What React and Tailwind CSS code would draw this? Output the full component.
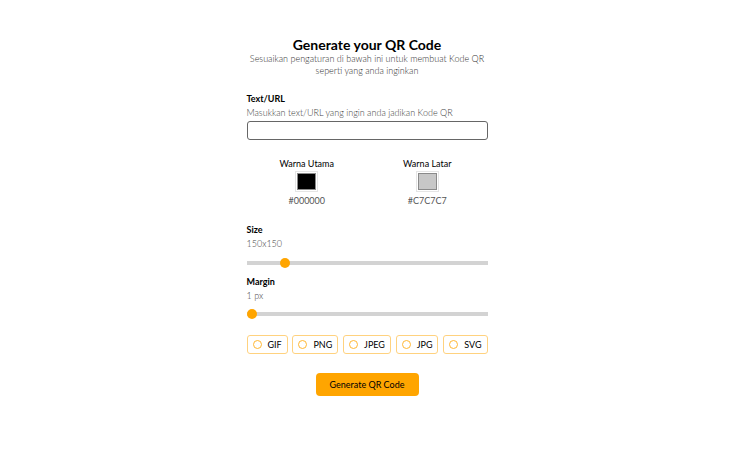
import React from "react";

function Slider({ pct }) {
  return (
    <div className="relative h-[10px] flex items-center">
      <div className="w-full h-[4px] bg-[#d3d3d3]" />
      <div
        className="absolute top-0 w-[10px] h-[10px] rounded-full bg-[#FFA500]"
        style={{ left: `calc(${pct}% - ${pct / 10}px)` }}
      />
    </div>
  );
}

function Swatch({ color, label, hex }) {
  return (
    <div className="flex flex-col items-center">
      <div className="text-[9px] leading-[12px] text-black">{label}</div>
      <div className="mt-[1px] w-[23px] h-[21px] border border-[#e5e5e5] p-px">
        <div className="w-full h-full border border-[#8a8a8a]" style={{ background: color }} />
      </div>
      <div className="mt-[3px] text-[9px] leading-[12px] text-[#555]">{hex}</div>
    </div>
  );
}

export default function App() {
  const formats = ["GIF", "PNG", "JPEG", "JPG", "SVG"];
  return (
    <div
      className="w-[732px] h-[462px] bg-white flex justify-center"
      style={{ fontFamily: "Lato, 'Noto Sans', sans-serif" }}
    >
      <div className="w-[241px] ml-[2px] pt-[37px]">
        <div className="text-center">
          <div className="text-[14px] leading-[16px] font-bold text-black">Generate your QR Code</div>
          <div className="text-[9px] leading-[12px] text-[#333] font-light">
            Sesuaikan pengaturan di bawah ini untuk membuat Kode QR
            <br />
            seperti yang anda inginkan
          </div>
        </div>

        <div className="mt-[16px] text-[9px] leading-[12px] font-bold text-black">Text/URL</div>
        <div className="mt-[2px] text-[9px] leading-[12px] text-[#444] font-light">
          Masukkan text/URL yang ingin anda jadikan Kode QR
        </div>
        <div className="mt-[2px] h-[19px] w-full rounded-[3px] border-[1.5px] border-[#666]" />

        <div className="mt-[18px] grid grid-cols-2">
          <Swatch color="#000000" label="Warna Utama" hex="#000000" />
          <Swatch color="#C7C7C7" label="Warna Latar" hex="#C7C7C7" />
        </div>

        <div className="mt-[17px] text-[9px] leading-[12px] font-bold text-black">Size</div>
        <div className="mt-[2px] text-[9px] leading-[12px] text-[#444] font-light">150x150</div>
        <div className="mt-[8px]">
          <Slider pct={14.5} />
        </div>

        <div className="mt-[8px] text-[9px] leading-[12px] font-bold text-black">Margin</div>
        <div className="mt-[2px] text-[9px] leading-[12px] text-[#444] font-light">1 px</div>
        <div className="mt-[7px]">
          <Slider pct={0} />
        </div>

        <div className="mt-[16px] flex justify-between">
          {formats.map((f) => (
            <div
              key={f}
              className="h-[19px] px-[5px] flex items-center gap-[6px] rounded-[3px] border border-[#FFD27F] text-[9px] text-black"
            >
              <div className="w-[9px] h-[9px] rounded-full border border-[#FFB733]" />
              <span>{f}</span>
            </div>
          ))}
        </div>

        <div className="mt-[19px] flex justify-center">
          <div className="w-[103px] h-[23px] rounded-[4px] bg-[#FFA500] flex items-center justify-center text-[9px] text-black">
            Generate QR Code
          </div>
        </div>
      </div>
    </div>
  );
}
